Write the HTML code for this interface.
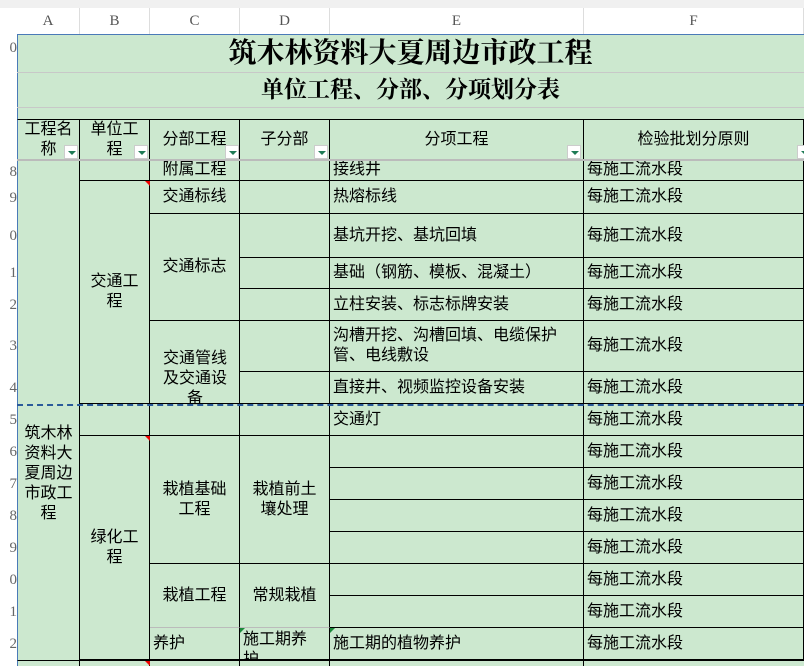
<!DOCTYPE html><html><head><meta charset="utf-8"><style>
body{margin:0;width:804px;height:666px;overflow:hidden;background:#fff;font-family:"Liberation Sans","Noto Sans CJK SC",sans-serif;position:relative}
.c{position:absolute;box-sizing:border-box;border-right:1px solid #000;border-bottom:1px solid #000;background:#cce8cf;display:flex;align-items:center;font-size:16px;color:#000;overflow:hidden;line-height:20px;padding:0 3px}
.ctr{justify-content:center;text-align:center}
.h{position:absolute;top:8px;height:26px;font-family:"Liberation Serif",serif;color:#555;font-size:15px;text-align:center;border-right:1px solid #ddd;box-sizing:border-box;line-height:26px}
.r{position:absolute;left:0;width:17px;font-size:15px;color:#666;text-align:right;font-family:"Liberation Serif",serif;overflow:hidden}
.dd{position:absolute;width:14px;height:14px;background:#fff;border:1px solid #ccc;box-sizing:border-box}
.dd:after{content:"";position:absolute;left:3px;top:5px;border-left:4px solid transparent;border-right:4px solid transparent;border-top:4px solid #1e7b55}
.tri{position:absolute;width:0;height:0;border-top:5px solid #e00;border-left:5px solid transparent}
</style></head><body>
<div style="position:absolute;left:0;top:0;width:804px;height:8px;background:#f0f0f0"></div>
<div class="h" style="left:17px;width:63px">A</div><div class="h" style="left:80px;width:70px">B</div><div class="h" style="left:150px;width:90px">C</div><div class="h" style="left:240px;width:90px">D</div><div class="h" style="left:330px;width:254px">E</div><div class="h" style="left:584px;width:220px">F</div>
<div style="position:absolute;left:17px;top:34px;width:787px;height:126px;background:#cce8cf;border-left:1px solid #4a7ab8;border-top:1px solid #4a7ab8;box-sizing:border-box"></div>
<div style="position:absolute;left:17px;top:72px;width:787px;height:1px;background:#c8c8c8"></div>
<div style="position:absolute;left:17px;top:107px;width:787px;height:1px;background:#c8c8c8"></div>
<div style="position:absolute;left:17px;top:38px;width:787px;text-align:center;font-family:'Liberation Serif','Noto Serif CJK SC',serif;font-weight:bold;font-size:28px;line-height:32px">筑木林资料大夏周边市政工程</div>
<div style="position:absolute;left:17px;top:76px;width:787px;text-align:center;font-family:'Liberation Serif','Noto Serif CJK SC',serif;font-weight:bold;font-size:23px;line-height:28px">单位工程、分部、分项划分表</div>
<div class="c ctr" style="left:17px;top:119px;width:63px;height:41px;border-top:1px solid #000;border-left:1px solid #4a7ab8">工程名<br>称</div>
<div class="c ctr" style="left:80px;top:119px;width:70px;height:41px;border-top:1px solid #000">单位工<br>程</div>
<div class="c ctr" style="left:150px;top:119px;width:90px;height:41px;border-top:1px solid #000">分部工程</div>
<div class="c ctr" style="left:240px;top:119px;width:90px;height:41px;border-top:1px solid #000">子分部</div>
<div class="c ctr" style="left:330px;top:119px;width:254px;height:41px;border-top:1px solid #000">分项工程</div>
<div class="c ctr" style="left:584px;top:119px;width:220px;height:41px;border-top:1px solid #000">检验批划分原则</div>
<div class="dd" style="left:64px;top:145px"></div><div class="dd" style="left:134px;top:145px"></div><div class="dd" style="left:225px;top:145px"></div><div class="dd" style="left:314px;top:145px"></div><div class="dd" style="left:567px;top:145px"></div><div class="dd" style="left:797px;top:145px"></div>
<div class="c" style="left:17px;top:160px;width:63px;height:500px;border-left:1px solid #4a7ab8;border-bottom:none;align-items:flex-start;padding-top:264px;justify-content:center;text-align:center">筑木林<br>资料大<br>夏周边<br>市政工<br>程</div>
<div class="c" style="left:80px;top:160px;width:70px;height:21px"></div>
<div class="c ctr" style="left:80px;top:181px;width:70px;height:223px">交通工<br>程</div>
<div class="c" style="left:80px;top:404px;width:70px;height:32px"></div>
<div class="c ctr" style="left:80px;top:436px;width:70px;height:224px">绿化工<br>程</div>
<div class="c ctr" style="left:150px;top:160px;width:90px;height:21px;align-items:flex-end">附属工程</div>
<div class="c ctr" style="left:150px;top:181px;width:90px;height:33px">交通标线</div>
<div class="c ctr" style="left:150px;top:214px;width:90px;height:107px">交通标志</div>
<div class="c" style="left:150px;top:321px;width:90px;height:83px"></div>
<div class="c" style="left:150px;top:404px;width:90px;height:32px"></div>
<div class="c ctr" style="left:150px;top:436px;width:90px;height:128px">栽植基础<br>工程</div>
<div class="c ctr" style="left:150px;top:564px;width:90px;height:64px;border-bottom:1px solid #bbb">栽植工程</div>
<div class="c" style="left:150px;top:628px;width:90px;height:32px">养护</div>
<div class="c" style="left:240px;top:160px;width:90px;height:21px"></div>
<div class="c" style="left:240px;top:181px;width:90px;height:33px"></div>
<div class="c" style="left:240px;top:214px;width:90px;height:44px"></div>
<div class="c" style="left:240px;top:258px;width:90px;height:31px"></div>
<div class="c" style="left:240px;top:289px;width:90px;height:32px"></div>
<div class="c" style="left:240px;top:321px;width:90px;height:51px"></div>
<div class="c" style="left:240px;top:372px;width:90px;height:32px"></div>
<div class="c" style="left:240px;top:404px;width:90px;height:32px"></div>
<div class="c ctr" style="left:240px;top:436px;width:90px;height:128px">栽植前土<br>壤处理</div>
<div class="c ctr" style="left:240px;top:564px;width:90px;height:64px;border-bottom:1px solid #bbb">常规栽植</div>
<div class="c" style="left:240px;top:628px;width:90px;height:32px;align-items:flex-start;padding-top:2px">施工期养<br>护</div>
<div style="position:absolute;left:150px;top:349px;width:90px;text-align:center;font-size:16px;line-height:20px">交通管线<br>及交通设<br>备</div>
<div class="c" style="left:330px;top:160px;width:254px;height:21px;align-items:flex-end">接线井</div>
<div class="c" style="left:330px;top:181px;width:254px;height:33px">热熔标线</div>
<div class="c" style="left:330px;top:214px;width:254px;height:44px">基坑开挖、基坑回填</div>
<div class="c" style="left:330px;top:258px;width:254px;height:31px">基础（钢筋、模板、混凝土）</div>
<div class="c" style="left:330px;top:289px;width:254px;height:32px">立柱安装、标志标牌安装</div>
<div class="c" style="left:330px;top:321px;width:254px;height:51px">沟槽开挖、沟槽回填、电缆保护<br>管、电线敷设</div>
<div class="c" style="left:330px;top:372px;width:254px;height:32px">直接井、视频监控设备安装</div>
<div class="c" style="left:330px;top:404px;width:254px;height:32px">交通灯</div>
<div class="c" style="left:330px;top:436px;width:254px;height:32px"></div>
<div class="c" style="left:330px;top:468px;width:254px;height:32px"></div>
<div class="c" style="left:330px;top:500px;width:254px;height:32px"></div>
<div class="c" style="left:330px;top:532px;width:254px;height:32px"></div>
<div class="c" style="left:330px;top:564px;width:254px;height:32px"></div>
<div class="c" style="left:330px;top:596px;width:254px;height:32px"></div>
<div class="c" style="left:330px;top:628px;width:254px;height:32px">施工期的植物养护</div>
<div class="c" style="left:584px;top:160px;width:220px;height:21px;align-items:flex-end">每施工流水段</div>
<div class="c" style="left:584px;top:181px;width:220px;height:33px">每施工流水段</div>
<div class="c" style="left:584px;top:214px;width:220px;height:44px">每施工流水段</div>
<div class="c" style="left:584px;top:258px;width:220px;height:31px">每施工流水段</div>
<div class="c" style="left:584px;top:289px;width:220px;height:32px">每施工流水段</div>
<div class="c" style="left:584px;top:321px;width:220px;height:51px">每施工流水段</div>
<div class="c" style="left:584px;top:372px;width:220px;height:32px">每施工流水段</div>
<div class="c" style="left:584px;top:404px;width:220px;height:32px">每施工流水段</div>
<div class="c" style="left:584px;top:436px;width:220px;height:32px">每施工流水段</div>
<div class="c" style="left:584px;top:468px;width:220px;height:32px">每施工流水段</div>
<div class="c" style="left:584px;top:500px;width:220px;height:32px">每施工流水段</div>
<div class="c" style="left:584px;top:532px;width:220px;height:32px">每施工流水段</div>
<div class="c" style="left:584px;top:564px;width:220px;height:32px">每施工流水段</div>
<div class="c" style="left:584px;top:596px;width:220px;height:32px">每施工流水段</div>
<div class="c" style="left:584px;top:628px;width:220px;height:32px">每施工流水段</div>
<div class="c" style="left:17px;top:660px;width:787px;height:6px;border:none;border-top:1px solid #000;border-left:1px solid #4a7ab8"></div>
<div style="position:absolute;left:79px;top:660px;width:1px;height:6px;background:#000"></div>
<div style="position:absolute;left:149px;top:660px;width:1px;height:6px;background:#000"></div>
<div style="position:absolute;left:239px;top:660px;width:1px;height:6px;background:#000"></div>
<div style="position:absolute;left:329px;top:660px;width:1px;height:6px;background:#000"></div>
<div style="position:absolute;left:583px;top:660px;width:1px;height:6px;background:#000"></div>
<div style="position:absolute;left:17px;top:159px;width:787px;height:2px;background:#bbb"></div>
<div style="position:absolute;left:17px;top:404px;width:787px;border-top:2px dashed #2a5a9a"></div>
<div class="tri" style="left:145px;top:181px"></div><div class="tri" style="left:145px;top:436px"></div><div class="tri" style="left:145px;top:661px"></div>
<div class="tri" style="left:240px;top:628px;border-top-color:#1a8a3a;border-left:none;border-right:5px solid transparent"></div>
<div class="tri" style="left:330px;top:628px;border-top-color:#1a8a3a;border-left:none;border-right:5px solid transparent"></div>
<div class="r" style="top:40px">0</div><div class="r" style="top:164px">8</div><div class="r" style="top:190px">9</div><div class="r" style="top:228px">0</div><div class="r" style="top:265px">1</div><div class="r" style="top:297px">2</div><div class="r" style="top:338px">3</div><div class="r" style="top:380px">4</div><div class="r" style="top:412px">5</div><div class="r" style="top:444px">6</div><div class="r" style="top:476px">7</div><div class="r" style="top:508px">8</div><div class="r" style="top:540px">9</div><div class="r" style="top:572px">0</div><div class="r" style="top:604px">1</div><div class="r" style="top:636px">2</div>
</body></html>
